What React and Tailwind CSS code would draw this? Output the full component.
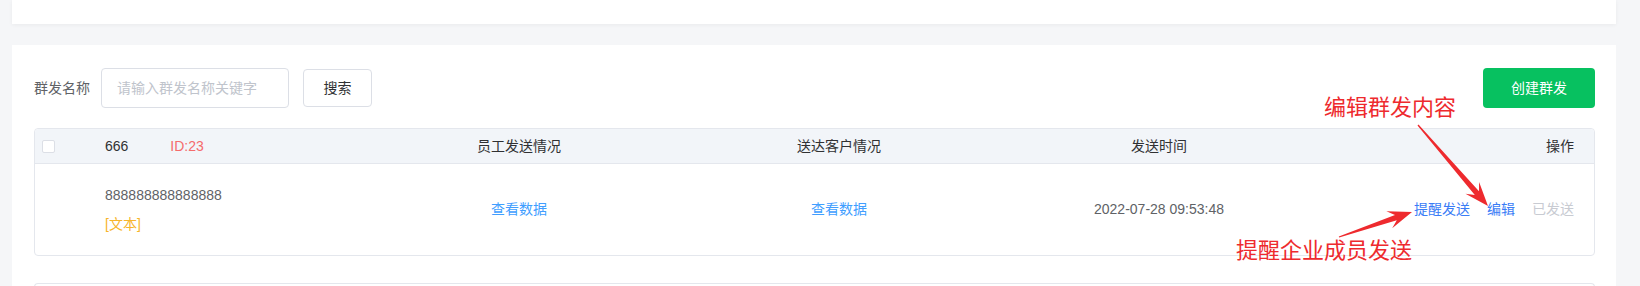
import React from "react";

const FONT = { fontFamily: '"Liberation Sans", "Noto Sans CJK SC", sans-serif' };

// tapered screenshot-style arrow, tail -> tip
const arrowPoints = (x1, y1, x2, y2) => {
  const dx = x2 - x1;
  const dy = y2 - y1;
  const len = Math.hypot(dx, dy);
  const ux = dx / len;
  const uy = dy / len;
  const px = -uy;
  const py = ux;
  const bx = x2 - ux * 17;
  const by = y2 - uy * 17;
  const wx = x2 - ux * 24;
  const wy = y2 - uy * 24;
  const pts = [
    [x1 + px * 0.6, y1 + py * 0.6],
    [bx + px * 2.8, by + py * 2.8],
    [wx + px * 9, wy + py * 9],
    [x2, y2],
    [wx - px * 9, wy - py * 9],
    [bx - px * 2.8, by - py * 2.8],
    [x1 - px * 0.6, y1 - py * 0.6],
  ];
  return pts.map((p) => p.map((v) => v.toFixed(1)).join(",")).join(" ");
};

const Checkbox = () => (
  <span className="block w-[13px] h-[13px] rounded-[2px] border border-[#dcdfe6] bg-white" />
);

export default function App() {
  return (
    <div className="relative w-full h-[286px] overflow-hidden bg-[#f5f6f8] text-[14px]" style={FONT}>
      <div className="pl-[12px] pr-[24px]">
        <div className="h-[24px] bg-white shadow-[0_1px_4px_rgba(0,0,0,0.05)]" />

        <div className="mt-[21px] bg-white pl-[22px] pr-[21px] pt-[23px] h-[260px]">
          <div className="flex items-center h-[40px]">
            <span className="text-[#606266] mr-[11px]">群发名称</span>
            <div className="w-[188px] h-[40px] rounded-[4px] border border-[#dcdfe6] flex items-center px-[15px] text-[#c0c4cc]">
              请输入群发名称关键字
            </div>
            <button className="ml-[14px] w-[69px] h-[38px] rounded-[4px] border border-[#dcdfe6] bg-white text-[#303133]">
              搜索
            </button>
            <button className="ml-auto w-[112px] h-[40px] rounded-[4px] bg-[#07c160] text-white">
              创建群发
            </button>
          </div>

          <div className="mt-[20px] rounded-[4px] border border-[#e4e7ed]">
            <div className="flex items-center h-[35px] bg-[#f2f5f9] border-b border-[#e4e7ed] text-[#303133] rounded-t-[4px]">
              <div className="w-[70px] pl-[7px]">
                <Checkbox />
              </div>
              <div className="w-[254px] flex">
                <span>666</span>
                <span className="ml-[42px] text-[#f56c6c]">ID:23</span>
              </div>
              <div className="w-[320px] text-center">员工发送情况</div>
              <div className="w-[320px] text-center">送达客户情况</div>
              <div className="w-[320px] text-center">发送时间</div>
              <div className="flex-1 text-right pr-[20px]">操作</div>
            </div>

            <div className="flex items-center h-[91px] text-[#606266]">
              <div className="w-[70px]" />
              <div className="w-[254px] flex flex-col gap-[8px]">
                <span>888888888888888</span>
                <span className="text-[#f7b52c]">[文本]</span>
              </div>
              <div className="w-[320px] text-center text-[#409eff]">查看数据</div>
              <div className="w-[320px] text-center text-[#409eff]">查看数据</div>
              <div className="w-[320px] text-center">2022-07-28 09:53:48</div>
              <div className="flex-1 flex justify-end gap-[17px] pr-[20px]">
                <span className="text-[#3a7cf6]">提醒发送</span>
                <span className="text-[#3a7cf6]">编辑</span>
                <span className="text-[#c8cbd2]">已发送</span>
              </div>
            </div>
          </div>

          <div className="mt-[27px] h-[20px] rounded-t-[4px] border-t border-x border-[#e4e7ed]" />
        </div>
      </div>

      <span className="absolute left-[1324px] top-[97px] text-[22px] leading-none text-[#ee2a2e]">编辑群发内容</span>
      <span className="absolute left-[1236px] top-[240px] text-[22px] leading-none text-[#ee2a2e]">提醒企业成员发送</span>

      <svg className="absolute left-0 top-0 pointer-events-none" width="1640" height="286">
        <polygon points={arrowPoints(1418, 125, 1488, 206)} fill="#ee2a2e" />
        <polygon points={arrowPoints(1339, 237, 1412, 212)} fill="#ee2a2e" />
      </svg>
    </div>
  );
}
